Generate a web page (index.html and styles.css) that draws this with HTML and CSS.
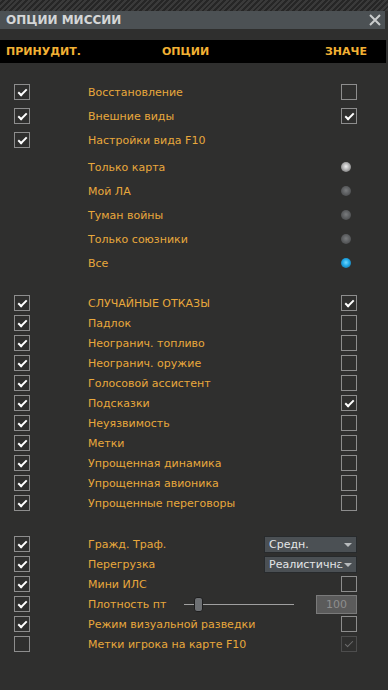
FILE: index.html
```html
<!DOCTYPE html>
<html lang="ru">
<head>
    <meta charset="UTF-8">
    <meta name="viewport" content="width=device-width, initial-scale=1.0">
    <title>Опции миссии</title>
    <link rel="stylesheet" href="styles.css">
</head>
<body>

<div class="hatch"></div>

<div class="window">
    <div class="titlebar">
        <span class="title">ОПЦИИ МИССИИ</span>
        <svg class="close" width="12" height="12" viewBox="0 0 12 12"><path d="M1 1 L11 11 M11 1 L1 11" stroke="#c9cbcc" stroke-width="2"/></svg>
    </div>

    <div class="colhead">
        <span>ПРИНУДИТ.</span>
        <span>ОПЦИИ</span>
        <span>ЗНАЧЕ</span>
    </div>

    <div class="group tall">
        <div class="row"><span class="cb on"></span><span class="label">Восстановление</span><span class="cb"></span></div>
        <div class="row"><span class="cb on"></span><span class="label">Внешние виды</span><span class="cb on"></span></div>
        <div class="row"><span class="cb on"></span><span class="label">Настройки вида F10</span><span></span></div>
    </div>

    <div class="group tall radios">
        <div class="row"><span></span><span class="label">Только карта</span><span class="radio light"></span></div>
        <div class="row"><span></span><span class="label">Мой ЛА</span><span class="radio"></span></div>
        <div class="row"><span></span><span class="label">Туман войны</span><span class="radio"></span></div>
        <div class="row"><span></span><span class="label">Только союзники</span><span class="radio"></span></div>
        <div class="row"><span></span><span class="label">Все</span><span class="radio blue"></span></div>
    </div>

    <div class="group second">
        <div class="row"><span class="cb on"></span><span class="label">СЛУЧАЙНЫЕ ОТКАЗЫ</span><span class="cb on"></span></div>
        <div class="row"><span class="cb on"></span><span class="label">Падлок</span><span class="cb"></span></div>
        <div class="row"><span class="cb on"></span><span class="label">Неогранич. топливо</span><span class="cb"></span></div>
        <div class="row"><span class="cb on"></span><span class="label">Неогранич. оружие</span><span class="cb"></span></div>
        <div class="row"><span class="cb on"></span><span class="label">Голосовой ассистент</span><span class="cb"></span></div>
        <div class="row"><span class="cb on"></span><span class="label">Подсказки</span><span class="cb on"></span></div>
        <div class="row"><span class="cb on"></span><span class="label">Неуязвимость</span><span class="cb"></span></div>
        <div class="row"><span class="cb on"></span><span class="label">Метки</span><span class="cb"></span></div>
        <div class="row"><span class="cb on"></span><span class="label">Упрощенная динамика</span><span class="cb"></span></div>
        <div class="row"><span class="cb on"></span><span class="label">Упрощенная авионика</span><span class="cb"></span></div>
        <div class="row"><span class="cb on"></span><span class="label">Упрощенные переговоры</span><span class="cb"></span></div>
    </div>

    <div class="group third">
        <div class="row"><span class="cb on"></span><span class="label">Гражд. Траф.</span><span class="select">Средн.<i class="arrow"></i></span></div>
        <div class="row"><span class="cb on"></span><span class="label">Перегрузка</span><span class="select">Реалистична<i class="arrow"></i></span></div>
        <div class="row"><span class="cb on"></span><span class="label">Мини ИЛС</span><span class="cb"></span></div>
        <div class="row">
            <span class="cb on"></span>
            <span class="slider-cell">
                <span class="label clip">Плотность птиц</span>
                <span class="slider"><span class="thumb"></span></span>
            </span>
            <span class="field">100</span>
        </div>
        <div class="row"><span class="cb on"></span><span class="label">Режим визуальной разведки</span><span class="cb"></span></div>
        <div class="row"><span class="cb"></span><span class="label">Метки игрока на карте F10</span><span class="cb on off"></span></div>
    </div>
</div>

</body>
</html>
```

FILE: styles.css
```css
body {
    margin: 0;
    background-color: #2f2f2e;
    font-family: "DejaVu Sans", Verdana, sans-serif;
    width: 388px;
    height: 690px;
    overflow: hidden;
}

.hatch {
    height: 11px;
    background: repeating-linear-gradient(135deg, #3a3a3a 0 2px, #262626 2px 4px);
}

.window {
    background: #2f2f2e;
}

.titlebar {
    height: 18px;
    background: #4c5154;
    display: flex;
    align-items: center;
    justify-content: space-between;
    padding: 0 4px 0 6px;
    margin-right: 3px;
}
.title {
    color: #d4d6d7;
    font-weight: bold;
    font-size: 12px;
}
.close { display: block; }

.colhead {
    margin-top: 11px;
    height: 23px;
    background: #000;
    display: grid;
    grid-template-columns: 156px 163px auto;
    align-items: center;
    padding-left: 6px;
    margin-right: 2px;
    color: #f2b134;
    font-weight: bold;
    font-size: 11px;
}

.group { margin-top: 17px; }
.group.radios { margin-top: 3px; }
.group.second { margin-top: 18px; }
.group.third { margin-top: 21px; }

.row {
    display: grid;
    grid-template-columns: 74px 1fr auto;
    align-items: center;
    height: 20px;
    padding: 0 31px 0 14px;
}
.tall .row { height: 24px; }

.label {
    color: #e8a83c;
    font-size: 11px;
    white-space: nowrap;
}

.cb {
    width: 14px;
    height: 14px;
    border: 1px solid #8d8d8d;
    box-sizing: content-box;
    display: flex;
    align-items: center;
    justify-content: center;
}
.cb.on::after {
    content: "";
    width: 7px;
    height: 3px;
    border-left: 2px solid #fff;
    border-bottom: 2px solid #fff;
    transform: translateY(-1px) rotate(-45deg);
}
.cb.off { border-color: #4d4d4d; }
.cb.off::after { border-color: #6e6e6e; border-width: 1px; }

.radio {
    width: 10px;
    height: 10px;
    border-radius: 50%;
    margin-right: 6px;
    background: radial-gradient(circle at 50% 45%, #7a7c7e 0, #5e6062 45%, #404142 100%);
}
.radio.light {
    background: radial-gradient(circle at 50% 45%, #f0f0f0 0, #b8b8b8 40%, #606060 100%);
}
.radio.blue {
    background: radial-gradient(circle at 50% 45%, #6fd8ff 0, #20a8e8 45%, #1a5d80 100%);
}

.select {
    height: 15px;
    border: 1px solid #272a2c;
    background: #4b5054;
    color: #e4e6e7;
    font-size: 11px;
    display: flex;
    align-items: center;
    padding-left: 4px;
    box-sizing: content-box;
    overflow: hidden;
    white-space: nowrap;
    position: relative;
    width: 87px;
}
.arrow {
    position: absolute;
    right: 4px;
    top: 6px;
    border-left: 4px solid transparent;
    border-right: 4px solid transparent;
    border-top: 4px solid #b8bbbd;
    box-shadow: -4px 0 0 0 #4b5054;
}

.slider-cell {
    display: flex;
    align-items: center;
}
.clip {
    width: 79px;
    overflow: hidden;
}
.slider {
    margin-left: 17px;
    width: 110px;
    height: 1px;
    background: #a0a0a0;
    position: relative;
}
.thumb {
    position: absolute;
    left: 10px;
    top: -7px;
    width: 7px;
    height: 13px;
    border-radius: 3px;
    background: #6d7073;
    border: 1px solid #1e1e1e;
}

.field {
    width: 39px;
    height: 17px;
    border: 1px solid #7a7a7a;
    background: #5b5b5b;
    color: #8e8e8e;
    font-size: 11px;
    display: flex;
    align-items: center;
    justify-content: center;
}
```
